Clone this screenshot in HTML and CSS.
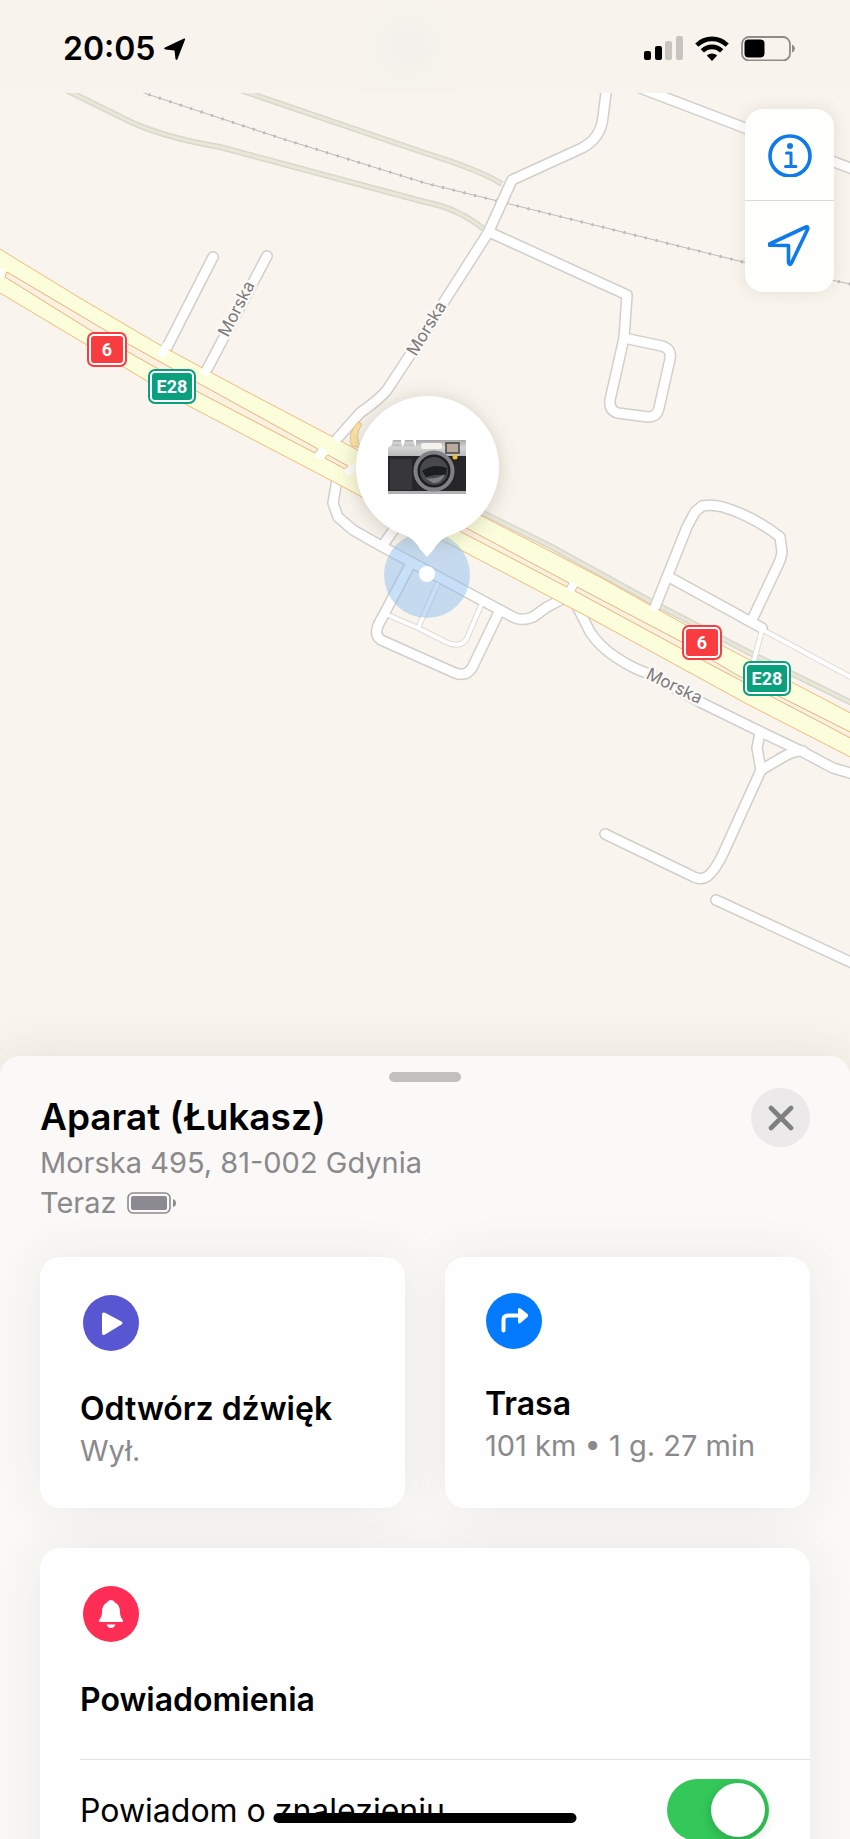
FILE: index.html
```html
<!DOCTYPE html>
<html lang="pl">

<head>
    <meta charset="utf-8">
    <meta name="viewport" content="width=device-width, initial-scale=1">
    <title>Aparat (Łukasz)</title>
    <link rel="stylesheet" href="styles.css">
</head>

<body>
    <header class="status">
        <div class="status-time">
            <span>20:05</span>
            <svg width="22" height="24" viewBox="0 0 22 24">
                <path d="M1 10.500 20 1.500Q21.500 1 21 2.800L13.500 22Q12.500 24 11.500 22L10.500 13.500 1.500 12.500Q-.8 11.800 1 10.500Z" />
            </svg>
        </div>
        <div class="status-icons">
            <svg width="39" height="25" viewBox="0 0 39 25">
                <rect x="0" y="15" width="7" height="9" rx="2" />
                <rect x="11" y="10" width="7" height="14" rx="2" />
                <rect x="21" y="5" width="7" height="19" rx="2" fill="#c8c4bf" />
                <rect x="32" y="0" width="7" height="24" rx="2" fill="#c8c4bf" />
            </svg>
            <svg width="34" height="25" viewBox="0 0 34 25">
                <g fill="none" stroke="#000" stroke-width="4.600">
                    <path d="M1.800 9.200A21.500 21.500 0 0 1 32.200 9.200" />
                    <path d="M7.300 14.900A13.700 13.700 0 0 1 26.700 14.900" />
                </g>
                <path d="M17 25 11.800 19.600A7.400 7.400 0 0 1 22.200 19.600Z" />
            </svg>
            <svg width="54" height="25" viewBox="0 0 54 25">
                <rect x="1" y="1" width="48" height="23.500" rx="7" fill="none" stroke="#8f8c88" stroke-width="1.800" />
                <rect x="3.500" y="3.500" width="20" height="18" rx="4" />
                <path d="M51 8.500Q54 10 54 12.500T51 16.500Z" fill="#8f8c88" />
            </svg>
        </div>
    </header>

    <main class="map">
        <svg class="map-canvas" viewBox="0 93 850 983" preserveAspectRatio="xMidYMin slice">
            <defs>
                <g id="streets">
                    <path d="M607 85 603 117Q601 138 582 148L512 180 488 233 408 358 387 390Q380 399 360 413L336 440" />
                    <path d="M489 232 627 295 624 338" />
                    <path d="M624 338 662 346Q672 349 670 359L659 408Q657 417 648 417L618 413Q609 411 610 400Z" />
                    <path d="M213 257 163 355" />
                    <path d="M267 256 204 375" />
                    <path d="M640 88 745 128 850 168 870 176" />
                    <path d="M337 480 333 503 338 517 353 530 383 547 500 610 515 618Q523 621 533 617L547 607 572 594" />
                    <path d="M383 545 395 528" />
                    <path d="M410 565 382 618Q372 634 381 640L455 673Q466 677 472 668L500 610" />
                    <path d="M578 608 590 632Q600 647 617 658T647 673L700 702 757 730 803 752 833 768 860 776" />
                    <path d="M760 733 757 748 761 770 727 845Q714 875 704 878 698 880 690 875L605 834" />
                    <path d="M761 770 783 757Q793 751 803 751" />
                    <path d="M716 900 870 971" />
                    <path d="M653 612 667 577 687 527 695 512 702 506Q712 504 723 507 753 516 780 537L782 552Q781 560 776 569L752 620" />
                    <path d="M669 577 762 628" />
                    <path d="M-10 276 4 270" />
                </g>
                <g id="lanes">
                    <path d="M388 615 418 628 446 642Q461 649 467 638L482 603" />
                    <path d="M438 583 418 628" />
                    <path d="M763 630 860 682" />
                    <path d="M762 630 753 664" />
                </g>
                <linearGradient id="metal" x1="0" y1="0" x2="0" y2="1">
                    <stop offset="0" stop-color="#a9a9ab" />
                    <stop offset=".4" stop-color="#d4d4d5" />
                    <stop offset="1" stop-color="#b5b5b7" />
                </linearGradient>
                <filter id="soft" x="-30%" y="-30%" width="160%" height="160%">
                    <feGaussianBlur stdDeviation="9" />
                </filter>
            </defs>

            <!-- tracks and railway -->
            <g class="track">
                <path d="M66 90 133 123Q167 138 220 147L425 202Q458 208 485 230" />
                <path d="M240 90 425 153Q480 170 502 184" />
                <path d="M475 509 550 546 650 601 750 653 860 707" />
            </g>
            <g class="track-inner">
                <path d="M66 90 133 123Q167 138 220 147L425 202Q458 208 485 230" />
                <path d="M240 90 425 153Q480 170 502 184" />
                <path d="M475 509 550 546 650 601 750 653 860 707" />
            </g>
            <path class="rail" d="M138 91 280 138 425 183 743 262 860 286" />
            <path class="rail-ties" d="M138 91 280 138 425 183 743 262 860 286" />

            <use href="#lanes" class="lane-case" />
            <use href="#streets" class="street-case" />
            <use href="#lanes" class="lane" />
            <use href="#streets" class="street" />

            <!-- main road -->
            <path class="ramp" d="M358 422Q346 436 352 446L362 448Q353 438 362 424Z" />
            <path class="highway" d="M-5 246 80 298 160 345 240 388 333 437 480 515 600 577 727 648 860 718 860 762 747 704 590 618 438 538 334 482 187 405 87 345 -5 290Z" />
            <g class="median">
                <path d="M7 272 130 345 200 384 318 449 315 453 200 393 90 330 5 277Z" />
                <path d="M328 455 348 466 345 469 325 458Z" />
                <path d="M440 514 569 583 567 587 440 521Z" />
                <path d="M577 587 680 641 737 675 860 737 860 743 717 668 575 591Z" />
            </g>
            <g class="crossing">
                <path d="M324 449 318 458" />
                <path d="M574 583 570 591" />
                <path d="M356 467 346 473" />
                <path d="M-2 272 4 273" />
                <path d="M167 344 161 357" />
                <path d="M208 367 204 375" />
                <path d="M340 435 335 441" />
                <path d="M656 604 653 611" />
            </g>

            <g class="street-name">
                <text transform="translate(228 338) rotate(-63)">Morska</text>
                <text transform="translate(416 357) rotate(-59)">Morska</text>
                <text transform="translate(645 678) rotate(26)">Morska</text>
            </g>

            <g class="shield">
                <g fill="#f93c3f">
                    <rect x="87" y="332" width="40" height="35" rx="7" />
                    <rect x="682" y="625" width="40" height="35" rx="7" />
                </g>
                <g fill="#0a9f7d">
                    <rect x="148" y="369" width="48" height="35" rx="7" />
                    <rect x="743" y="661" width="48" height="35" rx="7" />
                </g>
                <g class="shield-line">
                    <rect x="90" y="335" width="34" height="29" rx="4" />
                    <rect x="685" y="628" width="34" height="29" rx="4" />
                    <rect x="151" y="372" width="42" height="29" rx="4" />
                    <rect x="746" y="664" width="42" height="29" rx="4" />
                </g>
                <text x="107" y="356">6</text>
                <text x="702" y="649">6</text>
                <text x="172" y="393">E28</text>
                <text x="767" y="685">E28</text>
            </g>

            <!-- item pin -->
            <circle cx="427" cy="575" r="43" fill="#8bbcf0" fill-opacity=".47" />
            <circle cx="427" cy="470" r="74" fill="#6e6650" fill-opacity=".24" filter="url(#soft)" />
            <path fill="#fff" d="M427 396a71.500 71.500 0 0 1 21 140Q439 540 434 549L427 557 420 549Q415 540 407 536A71.500 71.500 0 0 1 427 396Z" />
            <circle cx="427" cy="574" r="8" fill="#fff" />

            <g class="camera">
                <path d="M391 447 393 440H401L402 447ZM403 447 405 440H413L415 447Z" fill="url(#metal)" />
                <path d="M416 440H466V458H388V449Q388 446 391 446H416Z" fill="url(#metal)" />
                <rect x="388" y="456" width="78" height="36" fill="#262628" />
                <rect x="390" y="459" width="22" height="31" fill="#37373a" />
                <rect x="388" y="491" width="78" height="3" fill="#b1b1b3" />
                <rect x="421" y="443" width="21" height="6" rx="2" fill="#f3f2ed" />
                <rect x="446" y="443" width="13" height="10" fill="#b9aaa0" stroke="#444446" stroke-width="1.500" />
                <circle cx="434" cy="471" r="18.500" fill="#1f1f21" stroke="#818185" stroke-width="4" />
                <circle cx="434" cy="471" r="14" fill="#48494d" />
                <path d="M422 471Q434 463 447 468L446 475 435 475 426 477Z" fill="#1c1d20" />
                <path d="M425 478Q435 480 445 474 441 484 433 483Z" fill="#7e8085" />
                <circle cx="455" cy="457" r="2.500" fill="#f1c02c" />
            </g>
        </svg>

        <div class="map-controls">
            <button type="button" aria-label="Informacje">
                <svg width="44" height="44" viewBox="0 0 44 44" fill="none" stroke="#0f7aec">
                    <circle cx="22" cy="23" r="20" stroke-width="3.600" />
                    <circle cx="22" cy="13" r="3" fill="#0f7aec" stroke="none" />
                    <path d="M18.500 20H23V33M17.500 33.500H28" stroke-width="3" stroke-linecap="round" stroke-linejoin="round" />
                </svg>
            </button>
            <button type="button" aria-label="Moje położenie">
                <svg width="44" height="44" viewBox="0 0 44 44" fill="none" stroke="#0f7aec" stroke-width="3.600" stroke-linejoin="round">
                    <path d="M1.500 19 38 2Q40.500 1.500 39.500 4.500L23.500 38Q21.500 41 20.500 37.500V20.500L3 20.300Q-.5 20 1.500 19Z" />
                </svg>
            </button>
        </div>
    </main>

    <section class="sheet">
        <div class="sheet-handle"></div>
        <div class="sheet-head">
            <div>
                <h1>Aparat (Łukasz)</h1>
                <p>Morska 495, 81-002 Gdynia</p>
                <p class="seen">Teraz
                    <svg width="50" height="22" viewBox="0 0 50 22">
                        <rect x="1" y="1" width="42" height="20" rx="5" fill="none" stroke="#8b8a90" stroke-width="1.600" />
                        <rect x="4" y="4" width="36" height="14" rx="2" fill="#8b8a90" />
                        <path d="M46 7Q49 8 49 11T46 15Z" fill="#8b8a90" />
                    </svg>
                </p>
            </div>
            <button type="button" class="close" aria-label="Zamknij">
                <svg width="26" height="26" viewBox="0 0 26 26" stroke="#7f7f80" stroke-width="4.600" stroke-linecap="round">
                    <path d="M3 3 23 23M23 3 3 23" />
                </svg>
            </button>
        </div>

        <div class="cards">
            <button type="button" class="card">
                <svg class="card-icon" viewBox="0 0 56 56">
                    <circle cx="28" cy="28" r="28" fill="#5856d1" />
                    <path d="M19 19.500Q19 16.500 22 17.800L38.500 26.500Q40.500 28 38.500 29.500L22 39.500Q19 41 19 38Z" fill="#fff" />
                </svg>
                <span class="card-title">Odtwórz dźwięk</span>
                <span class="card-note">Wył.</span>
            </button>
            <button type="button" class="card card-route">
                <svg class="card-icon" viewBox="0 0 56 56">
                    <circle cx="28" cy="28" r="28" fill="#047aff" />
                    <path d="M17.500 37.500V27Q17.500 22.500 22 22.500H34" fill="none" stroke="#fff" stroke-width="4" stroke-linecap="round" />
                    <path d="M32 16.500Q32 14 34.500 15.500L41.500 21Q43 22.500 41.500 24L34.500 30Q32 31.500 32 28.500Z" fill="#fff" />
                </svg>
                <span class="card-title">Trasa</span>
                <span class="card-note">101 km • 1 g. 27 min</span>
            </button>
        </div>

        <div class="card card-wide">
            <svg class="card-icon" viewBox="0 0 56 56">
                <circle cx="28" cy="28" r="28" fill="#fd2d56" />
                <path d="M28 14Q31 14 32 16.500 37 19 37 26 37 31 39.500 33.500 41 36 38.500 36H17.500Q15 36 16.500 33.500 19 31 19 26 19 19 24 16.500 25 14 28 14Z" fill="#fff" />
                <path d="M23.500 38.500H32.500Q31 42 28 42T23.500 38.500Z" fill="#fff" />
            </svg>
            <h2 class="card-title">Powiadomienia</h2>
            <div class="row">
                <label for="notify">Powiadom o znalezieniu</label>
                <input type="checkbox" class="switch" id="notify" checked>
            </div>
        </div>
    </section>

    <div class="home-bar"></div>
</body>

</html>
```

FILE: styles.css
```css
* {
    box-sizing: border-box;
}

body {
    margin: 0;
    height: 100vh;
    overflow: hidden;
    display: flex;
    flex-direction: column;
    position: relative;
    background: #f9f5ee;
    color: #000;
    font-family: Inter, "Liberation Sans", sans-serif;
}

button {
    border: 0;
    padding: 0;
    font: inherit;
    color: inherit;
}

svg {
    display: block;
    flex: none;
}

h1,
h2,
p {
    margin: 0;
}

/* status bar */
.status {
    flex: none;
    height: 93px;
    padding: 4px 55px 0 63px;
    display: flex;
    justify-content: space-between;
    align-items: center;
    background: radial-gradient(circle at 48% 50%, #f3efea, #f8f4ed 70px);
}

.status-time,
.status-icons {
    display: flex;
    align-items: center;
}

.status-time {
    gap: 9px;
    font-size: 32px;
    font-weight: 600;
}

.status-icons {
    gap: 12px;
}

/* map */
.map {
    flex: none;
    position: relative;
}

.map-canvas {
    width: 100%;
    height: 983px;
    background: #f9f5ee;
}

.track,
.track-inner,
.rail,
.rail-ties,
.street-case,
.street,
.lane-case,
.lane,
.crossing {
    fill: none;
}

.track {
    stroke: #d9d8ca;
    stroke-width: 6px;
}

.track-inner {
    stroke: #e9e6da;
    stroke-width: 3px;
}

.rail {
    stroke: #bdb9b8;
    stroke-width: 1px;
}

.rail-ties {
    stroke: #bcb8b8;
    stroke-width: 3px;
    stroke-dasharray: 2 9;
}

.street-case,
.street {
    stroke-linecap: round;
    stroke-linejoin: round;
}

.street-case {
    stroke: #d2cfcb;
    stroke-width: 12px;
}

.street {
    stroke: #fff;
    stroke-width: 9px;
}

.lane-case {
    stroke: #dedad5;
    stroke-width: 6px;
}

.lane {
    stroke: #fff;
    stroke-width: 4px;
}

.highway {
    fill: #fcfddb;
    stroke: #f0bc7c;
    stroke-width: 1px;
}

.median {
    fill: #fcf0de;
    stroke: #e8b481;
    stroke-width: 1px;
}

.ramp {
    fill: #fde2a0;
    stroke: #e4c596;
}

.crossing {
    stroke: #fff;
    stroke-width: 8px;
}

.street-name {
    font-size: 17px;
    fill: #7b797c;
    stroke: #fbf9f5;
    stroke-width: 5px;
    stroke-linejoin: round;
    paint-order: stroke;
}

.shield {
    font-family: "Liberation Sans Narrow", Roboto, sans-serif;
    font-size: 18px;
    font-weight: 700;
    text-anchor: middle;
}

.shield text {
    fill: #fff;
}

.shield-line {
    fill: none;
    stroke: #fff;
    stroke-width: 2px;
}

.map-controls {
    position: absolute;
    top: 16px;
    right: 16px;
    width: 89px;
    border-radius: 18px;
    overflow: hidden;
    background: #fefefd;
    box-shadow: 0 0 16px rgba(90, 80, 60, .14);
}

.map-controls button {
    display: flex;
    width: 100%;
    height: 91px;
    justify-content: center;
    align-items: center;
    background: none;
}

.map-controls button + button {
    height: 92px;
    border-top: 1px solid #dcdad8;
}

/* bottom sheet */
.sheet {
    flex: 1 1 0;
    min-height: 0;
    overflow: hidden;
    position: relative;
    margin-top: -20px;
    padding: 16px 40px 0;
    border-radius: 20px 20px 0 0;
    background: #faf9f7;
    box-shadow: 0 0 50px rgba(80, 75, 60, .12);
}

.sheet-handle {
    width: 72px;
    height: 10px;
    margin: 0 auto;
    border-radius: 5px;
    background: #c1c0bf;
}

.sheet-head {
    display: flex;
    justify-content: space-between;
    align-items: flex-start;
    padding: 6px 0 34px;
    color: #8a898c;
    font-size: 29px;
    line-height: 40px;
}

.sheet-head h1 {
    padding-top: 3px;
    color: #000;
    font-size: 37px;
    font-weight: 600;
    line-height: 52px;
}

.seen {
    display: flex;
    align-items: center;
    gap: 10px;
}

.close {
    display: flex;
    width: 59px;
    height: 59px;
    justify-content: center;
    align-items: center;
    border-radius: 50%;
    background: #ebe9e9;
}

.cards {
    display: flex;
    gap: 40px;
}

.card {
    flex: 1;
    display: flex;
    flex-direction: column;
    align-items: flex-start;
    padding: 38px 40px 36px;
    border-radius: 20px;
    background: #fefefe;
    box-shadow: 0 0 50px rgba(60, 50, 40, .08);
    text-align: left;
}

.card-icon {
    width: 56px;
    height: 56px;
    margin-left: 3px;
}

.card-title {
    margin-top: 38px;
    font-size: 32px;
    font-weight: 600;
    line-height: 40px;
}

.card-note {
    color: #8a898c;
    font-size: 29px;
    line-height: 43px;
}

.card-route {
    padding-top: 36px;
}

.card-route .card-icon {
    margin-left: 1px;
}

.card-route .card-title {
    margin-top: 35px;
}

.card-wide {
    margin-top: 40px;
    padding-right: 0;
}

.row {
    display: flex;
    justify-content: space-between;
    align-items: center;
    width: 100%;
    margin-top: 39px;
    padding: 19px 41px 19px 0;
    border-top: 1px solid #e3e2e3;
    font-size: 32px;
}

.switch {
    appearance: none;
    display: flex;
    width: 102px;
    height: 62px;
    margin: 0;
    padding: 4px;
    border-radius: 31px;
    background: #c9c9cb;
}

.switch::before {
    content: "";
    width: 54px;
    height: 54px;
    border-radius: 50%;
    background: #fff;
    box-shadow: 0 3px 12px rgba(0, 0, 0, .2);
}

.switch:checked {
    justify-content: flex-end;
    background: #34c85a;
}

.home-bar {
    position: absolute;
    left: 50%;
    bottom: 16px;
    width: 303px;
    height: 10px;
    border-radius: 5px;
    background: #000;
    transform: translateX(-50%);
}
```
